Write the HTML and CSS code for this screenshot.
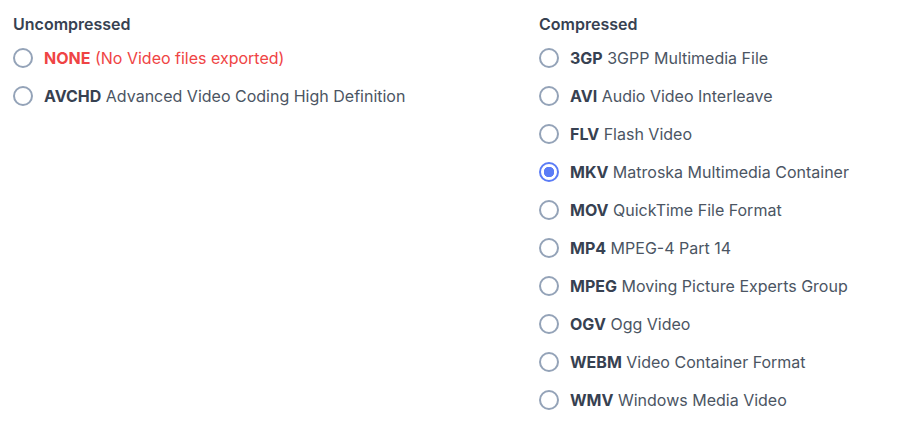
FILE: index.html
```html
<!DOCTYPE html>
<html lang="en">
<head>
  <meta charset="UTF-8">
  <title>Video Export Format</title>
  <link rel="stylesheet" href="styles.css">
</head>
<body>
  <div class="formats">
    <div class="group">
      <h3>Uncompressed</h3>
      <label class="option none">
        <input type="radio" name="format" value="none">
        <span><b>NONE</b> (No Video files exported)</span>
      </label>
      <label class="option">
        <input type="radio" name="format" value="avchd">
        <span><b>AVCHD</b> Advanced Video Coding High Definition</span>
      </label>
    </div>

    <div class="group">
      <h3>Compressed</h3>
      <label class="option">
        <input type="radio" name="format" value="3gp">
        <span><b>3GP</b> 3GPP Multimedia File</span>
      </label>
      <label class="option">
        <input type="radio" name="format" value="avi">
        <span><b>AVI</b> Audio Video Interleave</span>
      </label>
      <label class="option">
        <input type="radio" name="format" value="flv">
        <span><b>FLV</b> Flash Video</span>
      </label>
      <label class="option">
        <input type="radio" name="format" value="mkv" checked>
        <span><b>MKV</b> Matroska Multimedia Container</span>
      </label>
      <label class="option">
        <input type="radio" name="format" value="mov">
        <span><b>MOV</b> QuickTime File Format</span>
      </label>
      <label class="option">
        <input type="radio" name="format" value="mp4">
        <span><b>MP4</b> MPEG-4 Part 14</span>
      </label>
      <label class="option">
        <input type="radio" name="format" value="mpeg">
        <span><b>MPEG</b> Moving Picture Experts Group</span>
      </label>
      <label class="option">
        <input type="radio" name="format" value="ogv">
        <span><b>OGV</b> Ogg Video</span>
      </label>
      <label class="option">
        <input type="radio" name="format" value="webm">
        <span><b>WEBM</b> Video Container Format</span>
      </label>
      <label class="option">
        <input type="radio" name="format" value="wmv">
        <span><b>WMV</b> Windows Media Video</span>
      </label>
    </div>
  </div>
</body>
</html>
```

FILE: styles.css
```css
body {
  font-family: Inter, 'Noto Sans', sans-serif;
  background: #fff;
  margin: 0;
  padding: 13px 13px;
  color: #4b5563;
}

.formats {
  display: grid;
  grid-template-columns: 526px 1fr;
}

h3 {
  margin: 0 0 4px;
  font-size: 16px;
  font-weight: 600;
  line-height: 22px;
  color: #374151;
}

.option {
  display: flex;
  align-items: center;
  gap: 11px;
  height: 38px;
  font-size: 16px;
  cursor: pointer;
}

.option b {
  font-weight: 700;
  color: #374151;
}

.option.none,
.option.none b {
  color: #ef4444;
}

input[type="radio"] {
  appearance: none;
  margin: 0;
  width: 20px;
  height: 20px;
  border: 2px solid #94a3b8;
  border-radius: 50%;
  background: #fff;
  flex-shrink: 0;
}

input[type="radio"]:checked {
  border-color: #5b7cf6;
  background: radial-gradient(circle, #5b7cf6 0 5px, #fff 5.5px);
}
```
